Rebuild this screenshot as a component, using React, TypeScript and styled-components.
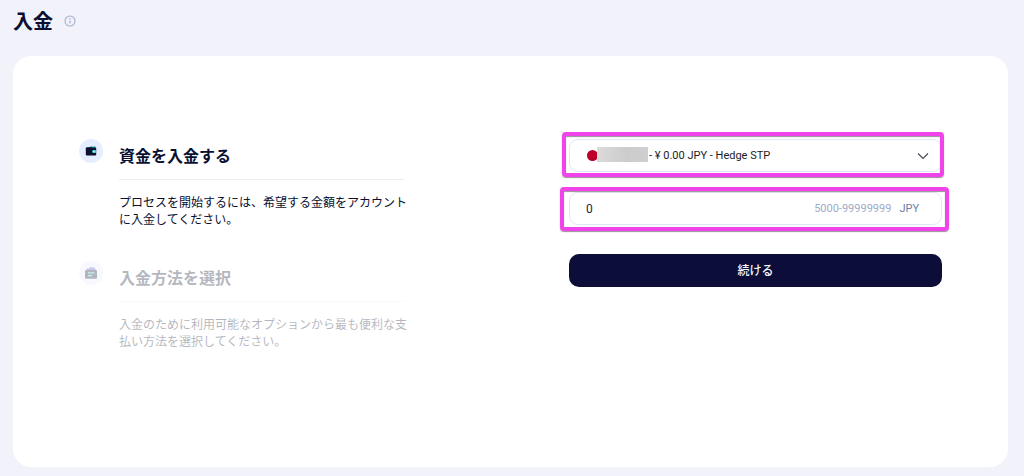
import React from "react";
import styled, { createGlobalStyle } from "styled-components";

const GlobalStyle = createGlobalStyle`
  *, *::before, *::after { box-sizing: border-box; }
  body {
    margin: 0;
    background: #f2f2fb;
    color: #0b1030;
    font-family: "Noto Sans CJK JP", sans-serif;
  }
  h1, h2, p { margin: 0; }
`;

const latin = `Roboto, "Noto Sans CJK JP", sans-serif`;

const Page = styled.div`
  display: flex;
  flex-direction: column;
  min-height: 100vh;
  padding: 0 16px 9px 13px;
`;

const Header = styled.header`
  display: flex;
  align-items: center;
  gap: 11px;
  height: 42px;
  margin-bottom: 14px;
`;

const Title = styled.h1`
  font-size: 20px;
  line-height: 28px;
  font-weight: 700;
`;

const InfoButton = styled.button`
  display: flex;
  padding: 0;
  border: 0;
  background: none;
  color: #a3aecb;
`;

const Card = styled.main`
  flex: 1;
  display: grid;
  grid-template-columns: 325fr 373fr;
  column-gap: 165px;
  align-items: start;
  padding: 83px 66px 66px;
  border-radius: 18px;
  background: #fff;
`;

const Steps = styled.div`
  display: flex;
  flex-direction: column;
  gap: 34px;
`;

const StepRow = styled.section<{ $muted?: boolean }>`
  display: grid;
  grid-template-columns: 24px minmax(0, 1fr);
  column-gap: 16px;
  opacity: ${(p) => (p.$muted ? 0.3 : 1)};
`;

const StepIcon = styled.span`
  display: flex;
  align-items: center;
  justify-content: center;
  width: 24px;
  height: 24px;
  border-radius: 50%;
  background: #e6edff;
`;

const StepTitle = styled.h2`
  padding: 4px 0 12px;
  border-bottom: 1px solid #ededf0;
  font-size: 16px;
  line-height: 24px;
  font-weight: 700;
`;

const StepText = styled.p`
  margin-top: 13px;
  font-size: 12px;
  line-height: 17px;
  white-space: nowrap;
`;

const Form = styled.form`
  display: flex;
  flex-direction: column;
  gap: 20px;
`;

const Field = styled.div<{ $mark: string }>`
  position: relative;
  display: flex;
  align-items: center;
  height: 33px;
  padding: 0 18px 0 16px;
  border: 1px solid #e0e7f8;
  border-radius: 9px;
  font-family: ${latin};
  font-size: 11px;

  &::after {
    content: "";
    position: absolute;
    inset: ${(p) => p.$mark};
    border: 4px solid #f043ea;
    border-radius: 4px;
    box-shadow: 0 1px 1px #9a8f9a, inset 0 1px 1px #9a8f9a;
    pointer-events: none;
  }
`;

const Flag = styled.span`
  flex: none;
  width: 11px;
  height: 11px;
  margin-left: 1px;
  border-radius: 50%;
  background: #bd0029;
`;

const Redacted = styled.span`
  flex: none;
  width: 51px;
  height: 15px;
  margin: 0 1px 2px -1px;
  background: linear-gradient(90deg, #dcdadb, #cccccc 60%, #cfcfcf);
`;

const AccountSelect = styled.select`
  flex: 1;
  min-width: 0;
  height: 24px;
  padding: 0;
  border: 0;
  outline: 0;
  appearance: none;
  background: none;
  color: #1c1c22;
  font: inherit;
`;

const Chevron = styled.svg`
  flex: none;
  margin-right: -6px;
  pointer-events: none;
`;

const AmountInput = styled.input`
  flex: 1;
  min-width: 0;
  height: 24px;
  padding: 0;
  border: 0;
  outline: 0;
  background: none;
  color: #1b2240;
  font-family: inherit;
  font-size: 12px;
`;

const Limits = styled.span`
  margin-right: 8px;
  color: #a0abc9;
`;

const Currency = styled.span`
  margin-right: 4px;
  color: #6d7ca6;
`;

const Submit = styled.button`
  height: 33px;
  margin-top: 9px;
  padding: 0 16px 3px;
  border: 0;
  border-radius: 10px;
  background: #0c0e39;
  color: #f4f4fa;
  font-family: inherit;
  font-size: 12px;
  font-weight: 500;
`;

const InfoIcon = () => (
  <svg width="12" height="12" viewBox="0 0 12 12" fill="none" stroke="currentColor">
    <circle cx="6" cy="6" r="5" strokeWidth="1.1" />
    <path d="M6 5.4v3.1" strokeWidth="1.2" />
    <circle cx="6" cy="3.7" r=".7" fill="currentColor" stroke="none" />
  </svg>
);

const WalletIcon = () => (
  <svg width="12" height="12" viewBox="0 0 12 12">
    <path d="M1.4 2.6 9.6 1.2a.8.8 0 0 1 1 .8v1.4H1.4z" fill="#2fb9b5" />
    <path d="M1.4 2.5 7 1.6v1.6H1.4z" fill="#0b1030" opacity=".6" />
    <rect x=".8" y="2.5" width="10.4" height="8" rx="1" fill="#0b1030" />
    <rect x="7.2" y="5.1" width="4" height="2.8" rx="1.2" fill="#3fd0c9" />
    <circle cx="8.8" cy="6.5" r=".8" fill="#e6ffff" />
  </svg>
);

const MethodIcon = () => (
  <svg width="14" height="14" viewBox="0 0 14 14">
    <path d="M2.6 5V2.6l1.8-.4.8.6L6.6.6l1.6 1.4L9.8.7l.6 1.7 1.2.2V5z" fill="#4650b8" />
    <rect x="1" y="4" width="12" height="8.8" rx="1.2" fill="#0b1030" />
    <path d="M4 6.9h6.4M4 9.6h4" stroke="#45d0c4" strokeWidth="1.2" />
  </svg>
);

interface StepProps {
  icon: React.ReactNode;
  title: string;
  lines: [string, string];
  muted?: boolean;
}

const Step = ({ icon, title, lines, muted }: StepProps) => (
  <StepRow $muted={muted}>
    <StepIcon>{icon}</StepIcon>
    <div>
      <StepTitle>{title}</StepTitle>
      <StepText>
        {lines[0]}
        <br />
        {lines[1]}
      </StepText>
    </div>
  </StepRow>
);

export default function App() {
  return (
    <>
      <GlobalStyle />
      <Page>
        <Header>
          <Title>入金</Title>
          <InfoButton type="button" aria-label="情報">
            <InfoIcon />
          </InfoButton>
        </Header>
        <Card>
          <Steps>
            <Step
              icon={<WalletIcon />}
              title="資金を入金する"
              lines={["プロセスを開始するには、希望する金額をアカウント", "に入金してください。"]}
            />
            <Step
              muted
              icon={<MethodIcon />}
              title="入金方法を選択"
              lines={["入金のために利用可能なオプションから最も便利な支", "払い方法を選択してください。"]}
            />
          </Steps>
          <Form onSubmit={(e) => e.preventDefault()}>
            <Field $mark="-8px -3px -6px -8px">
              <Flag />
              <Redacted />
              <AccountSelect aria-label="口座">
                <option>- ¥ 0.00 JPY - Hedge STP</option>
              </AccountSelect>
              <Chevron width="12" height="12" viewBox="0 0 12 12" fill="none" stroke="#4a4a55" strokeWidth="1.2">
                <path d="m1 3.5 5 5 5-5" />
              </Chevron>
            </Field>
            <Field $mark="-6px -8px -7px -10px">
              <AmountInput aria-label="金額" inputMode="numeric" defaultValue="0" />
              <Limits>5000-99999999</Limits>
              <Currency>JPY</Currency>
            </Field>
            <Submit type="submit">続ける</Submit>
          </Form>
        </Card>
      </Page>
    </>
  );
}
